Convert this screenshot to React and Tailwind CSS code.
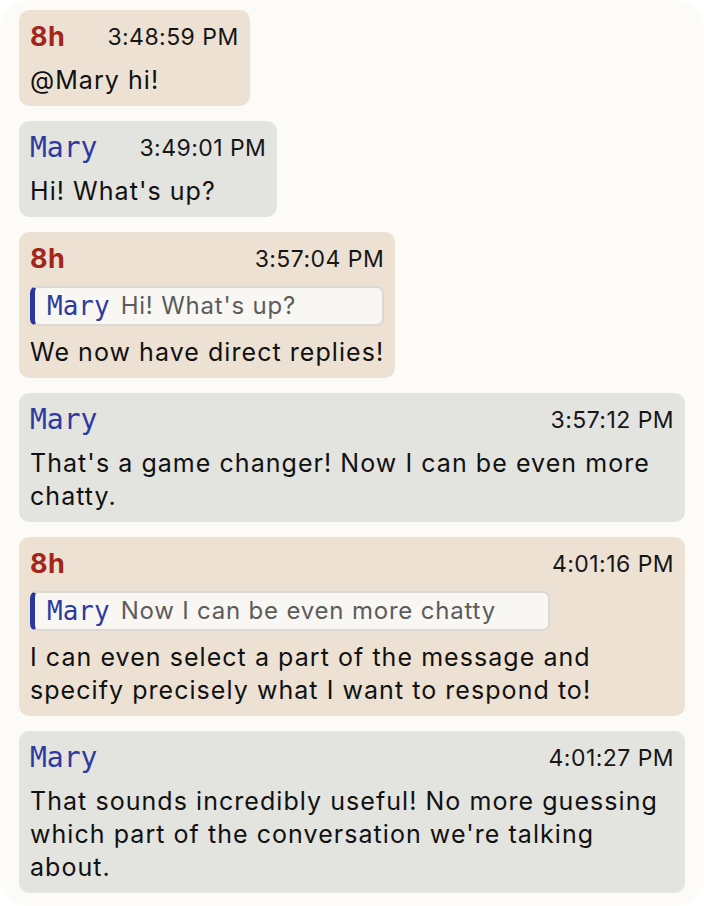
import React from "react";

const messages = [
  { id: 1, from: "8h", time: "3:48:59 PM", text: "@Mary hi!" },
  { id: 2, from: "Mary", time: "3:49:01 PM", text: "Hi! What's up?" },
  {
    id: 3,
    from: "8h",
    time: "3:57:04 PM",
    reply: { from: "Mary", text: "Hi! What's up?" },
    text: "We now have direct replies!",
  },
  {
    id: 4,
    from: "Mary",
    time: "3:57:12 PM",
    text: "That's a game changer! Now I can be even more chatty.",
  },
  {
    id: 5,
    from: "8h",
    time: "4:01:16 PM",
    reply: { from: "Mary", text: "Now I can be even more chatty" },
    text: "I can even select a part of the message and specify precisely what I want to respond to!",
  },
  {
    id: 6,
    from: "Mary",
    time: "4:01:27 PM",
    text: "That sounds incredibly useful! No more guessing which part of the conversation we're talking about.",
  },
];

function Name({ who }) {
  // 8h is the local user: bold red; everyone else gets the mono blue tag
  if (who === "8h") {
    return (
      <span className="font-['Inter',sans-serif] text-[27px] font-bold tracking-[0.5px] text-[#a3261c]">
        {who}
      </span>
    );
  }
  return (
    <span className="font-['DejaVu_Sans_Mono',monospace] text-[28px] text-[#2d3a9f]">
      {who}
    </span>
  );
}

function Quote({ reply }) {
  return (
    <div className="mt-[10px] flex h-[40px] w-full max-w-[520px] items-center overflow-hidden rounded-[7px] border-2 border-l-[5px] border-[#dcd8d2] border-l-[#2b36a0] bg-[#f9f7f4] pl-[12px] pr-3">
      <span className="font-['DejaVu_Sans_Mono',monospace] text-[26px] leading-normal text-[#2d3a9f]">
        {reply.from}
      </span>
      <span className="ml-[11px] truncate text-[24px] leading-normal tracking-[0.8px] text-[#5c5c5c]">
        {reply.text}
      </span>
    </div>
  );
}

function Bubble({ msg }) {
  const mine = msg.from === "8h";
  return (
    <div
      className={`w-fit max-w-full rounded-[10px] px-[11px] pb-[9px] pt-[10px] ${
        mine ? "bg-[#ede1d3]" : "bg-[#e3e3df]"
      }`}
    >
      <div className="flex h-[34px] items-center justify-between gap-[42px]">
        <Name who={msg.from} />
        <span className="text-[23px] tracking-[0.45px] text-[#161616]">{msg.time}</span>
      </div>
      {msg.reply && <Quote reply={msg.reply} />}
      <p className="mt-[10px] text-[25px] leading-[33px] tracking-[1.05px] text-[#111]">
        {msg.text}
      </p>
    </div>
  );
}

export default function App() {
  return (
    <div className="min-h-screen bg-white">
      <div className="flex h-[906px] flex-col gap-[15px] rounded-[28px] bg-[#fcfbf7] px-[19px] pt-[10px] font-['Inter',sans-serif]">
        {messages.map((m) => (
          <Bubble key={m.id} msg={m} />
        ))}
      </div>
    </div>
  );
}
